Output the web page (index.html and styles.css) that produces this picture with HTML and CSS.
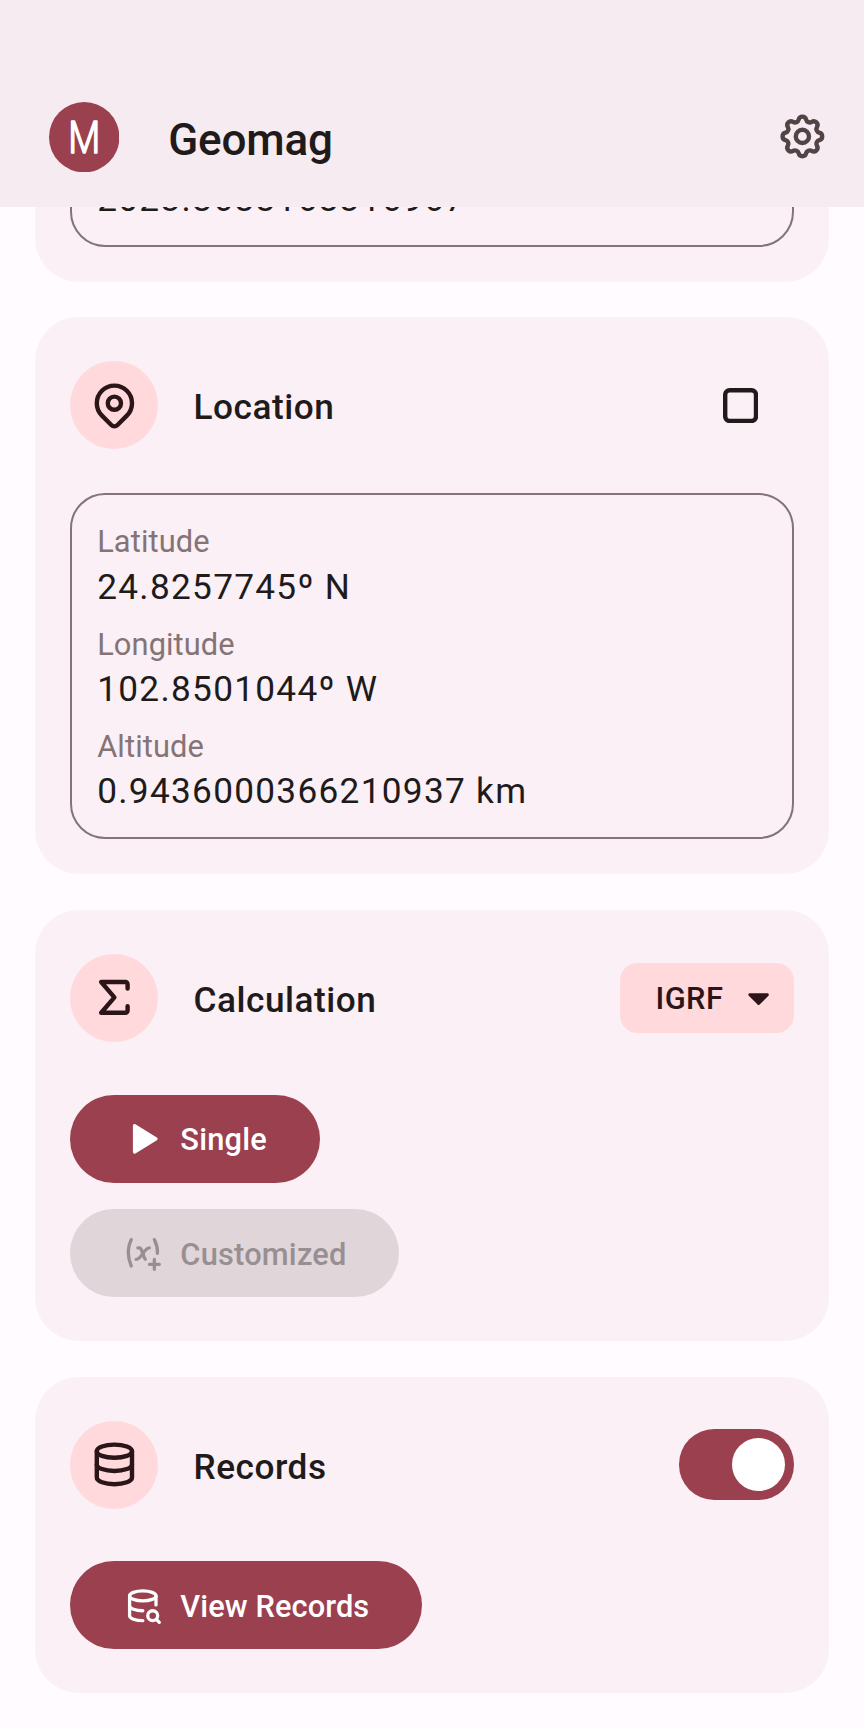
FILE: index.html
```
<!DOCTYPE html>
<html lang="en">
<head>
<meta charset="utf-8">
<title>Geomag</title>
<link rel="stylesheet" href="styles.css">
</head>
<body>
<header class="app-bar">
  <svg class="logo" viewBox="0 0 70.4 70.4"><circle cx="35.2" cy="35.2" r="35.2"/><text x="19.2" y="51.2" textLength="32" lengthAdjust="spacingAndGlyphs">M</text></svg>
  <h1 class="app-title">Geomag</h1>
  <svg class="icon settings" viewBox="0 0 24 24"><path d="M10.325 4.317c.426 -1.756 2.924 -1.756 3.35 0a1.724 1.724 0 0 0 2.573 1.066c1.543 -.94 3.31 .826 2.37 2.37a1.724 1.724 0 0 0 1.065 2.572c1.756 .426 1.756 2.924 0 3.35a1.724 1.724 0 0 0 -1.066 2.573c.94 1.543 -.826 3.31 -2.37 2.37a1.724 1.724 0 0 0 -2.572 1.065c-.426 1.756 -2.924 1.756 -3.35 0a1.724 1.724 0 0 0 -2.573 -1.066c-1.543 .94 -3.31 -.826 -2.37 -2.37a1.724 1.724 0 0 0 -1.065 -2.572c-1.756 -.426 -1.756 -2.924 0 -3.35a1.724 1.724 0 0 0 1.066 -2.573c-.94 -1.543 .826 -3.31 2.37 -2.37c1 .608 2.296 .07 2.572 -1.065z"/><circle cx="12" cy="12" r="3"/></svg>
</header>
<main class="content">
  <section class="card card-scrolled">
    <div class="field"><div class="value">2023.8688168316967</div></div>
  </section>

  <section class="card">
    <div class="card-head">
      <span class="badge"><svg class="icon" viewBox="0 0 24 24"><circle cx="12" cy="11" r="3"/><path d="M17.657 16.657l-4.243 4.243a2 2 0 0 1 -2.827 0l-4.244 -4.243a8 8 0 1 1 11.314 0z"/></svg></span>
      <h2 class="card-title">Location</h2>
      <svg class="checkbox" viewBox="0 0 16 16"><rect x="1" y="1" width="14" height="14" rx="2"/></svg>
    </div>
    <div class="field">
      <div class="label">Latitude</div><div class="value">24.8257745º N</div>
      <div class="label">Longitude</div><div class="value">102.8501044º W</div>
      <div class="label">Altitude</div><div class="value">0.9436000366210937 km</div>
    </div>
  </section>

  <section class="card">
    <div class="card-head">
      <span class="badge"><svg class="icon" viewBox="0 0 24 24"><path d="M18 16v2a1 1 0 0 1 -1 1h-11l6 -7l-6 -7h11a1 1 0 0 1 1 1v2"/></svg></span>
      <h2 class="card-title">Calculation</h2>
      <button class="select"><span class="text">IGRF</span><svg class="caret" viewBox="0 0 24 24"><path d="M18 9c.852 0 1.297 .986 .783 1.623l-.076 .084l-6 6a1 1 0 0 1 -1.414 0l-6 -6c-.63 -.63 -.184 -1.707 .707 -1.707z"/></svg></button>
    </div>
    <div class="actions">
      <button class="btn"><svg class="icon solid" viewBox="0 0 24 24"><path d="M6 4v16a1 1 0 0 0 1.524 .852l13 -8a1 1 0 0 0 0 -1.704l-13 -8a1 1 0 0 0 -1.524 .852z"/></svg><span class="text">Single</span></button>
      <button class="btn btn-disabled"><svg class="icon" viewBox="0 0 24 24"><path d="M5 4c-2.5 5 -2.5 10 0 16m14 -16c1.38 2.76 2 5.52 1.855 8.28"/><path d="M9 9h1c1 0 1 1 2.016 3.527c.782 1.966 .943 3 1.478 3.343"/><path d="M8 16c1.5 0 3 -2 4 -3.5s2.5 -3.5 4 -3.5"/><path d="M16 19h6M19 16v6"/></svg><span class="text">Customized</span></button>
    </div>
  </section>

  <section class="card">
    <div class="card-head">
      <span class="badge"><svg class="icon" viewBox="0 0 24 24"><ellipse cx="12" cy="6" rx="8" ry="3"/><path d="M4 6v6a8 3 0 0 0 16 0v-6"/><path d="M4 12v6a8 3 0 0 0 16 0v-6"/></svg></span>
      <h2 class="card-title">Records</h2>
      <span class="switch"><span class="knob"></span></span>
    </div>
    <div class="actions">
      <button class="btn btn-records"><svg class="icon" viewBox="0 0 24 24"><ellipse cx="12" cy="6" rx="8" ry="3"/><path d="M4 6v6c0 1.657 3.582 3 8 3m8 -3.5v-5.5"/><path d="M4 12v6c0 1.657 3.582 3 8 3"/><circle cx="18" cy="18" r="3"/><path d="M20.2 20.2l1.8 1.8"/></svg><span class="text">View Records</span></button>
    </div>
  </section>
</main>
</body>
</html>
```

FILE: styles.css
```
* { box-sizing: border-box; }

body {
  margin: 0;
  height: 1728px;
  overflow: hidden;
  background: #fffbff;
  color: #201a1b;
  font-family: Roboto, sans-serif;
  display: flex;
  flex-direction: column;
}

h1, h2 { margin: 0; font-weight: 500; }

.icon {
  width: 52.8px;
  height: 52.8px;
  flex: none;
  fill: none;
  stroke: currentColor;
  stroke-width: 2;
  stroke-linecap: round;
  stroke-linejoin: round;
}

.app-bar {
  flex: none;
  height: 207px;
  padding: 66.4px 35.4px 0 48.8px;
  background: #f6ebf1;
  display: flex;
  align-items: center;
}

.logo { width: 70.4px; height: 70.4px; flex: none; fill: #9b404f; }
.logo text {
  fill: #fff;
  stroke: #fff;
  stroke-width: 1.6;
  stroke-linejoin: round;
  font-size: 44.5px;
  font-weight: 300;
}
.app-title {
  flex: 1;
  margin-left: 49px;
  padding-top: 6px;
  font-size: 44px;
  line-height: 52px;
  letter-spacing: -0.15px;
}
.settings { color: #524345; }

.content {
  flex: 1;
  min-height: 0;
  overflow: hidden;
  padding: 0 35.2px;
  display: flex;
  flex-direction: column;
  gap: 35.4px;
}

.card {
  flex: none;
  border-radius: 44px;
  background: #faf0f5;
  padding: 44px 35.2px 35.2px;
}
.card-scrolled { margin-top: -99.6px; }

.card-head { display: flex; align-items: center; height: 88px; }
.badge {
  width: 88px;
  height: 88px;
  flex: none;
  border-radius: 50%;
  background: #ffd9dc;
  color: #2c1518;
  display: flex;
  align-items: center;
  justify-content: center;
}
.card-title {
  flex: 1;
  margin-left: 35.2px;
  padding-top: 4.6px;
  font-size: 35.2px;
  line-height: 44px;
  letter-spacing: 0.52px;
}

.checkbox {
  width: 35.2px;
  height: 35.2px;
  margin-right: 35.2px;
  fill: none;
  stroke: #201a1b;
  stroke-width: 2;
}

.field {
  border: 2.2px solid #857375;
  border-radius: 35.2px;
  padding: 23.4px 24.8px 23.8px;
}
.card-head + .field { margin-top: 44px; }
.label {
  padding-top: 0.8px;
  color: #857375;
  font-size: 30.8px;
  line-height: 45.3px;
  letter-spacing: 0.1px;
}
.value { font-size: 35.2px; line-height: 44px; letter-spacing: 1.3px; }
.value + .label { margin-top: 12.3px; }

.text { padding-top: 3px; }

.select {
  height: 70.4px;
  padding: 0 17.6px 0 35.2px;
  border: 0;
  border-radius: 17.6px;
  background: #ffd9dc;
  color: #2c1518;
  font: 500 30.8px/40px Roboto, sans-serif;
  letter-spacing: 0.4px;
  display: flex;
  align-items: center;
  gap: 17.6px;
}
.caret { width: 35.2px; height: 35.2px; fill: currentColor; }

.actions {
  margin-top: 52.8px;
  padding-bottom: 8.8px;
  display: flex;
  flex-direction: column;
  align-items: flex-start;
  gap: 26.6px;
}
.btn {
  height: 88px;
  padding: 0 52.8px;
  border: 0;
  border-radius: 44px;
  background: #9b404f;
  color: #fff;
  font: 500 30.8px/40px Roboto, sans-serif;
  letter-spacing: 0.2px;
  display: flex;
  align-items: center;
  gap: 17.6px;
}
.btn .icon { width: 39.6px; height: 39.6px; }
.btn .solid { fill: currentColor; stroke: none; }
.btn-disabled { background: #e0d6da; color: #988f92; }
.btn-records { letter-spacing: 0.08px; }

.switch {
  width: 114.4px;
  height: 70.4px;
  padding: 8.8px;
  border-radius: 35.2px;
  background: #9b404f;
  display: flex;
  justify-content: flex-end;
}
.knob { width: 52.8px; height: 52.8px; border-radius: 50%; background: #fff; }
```
